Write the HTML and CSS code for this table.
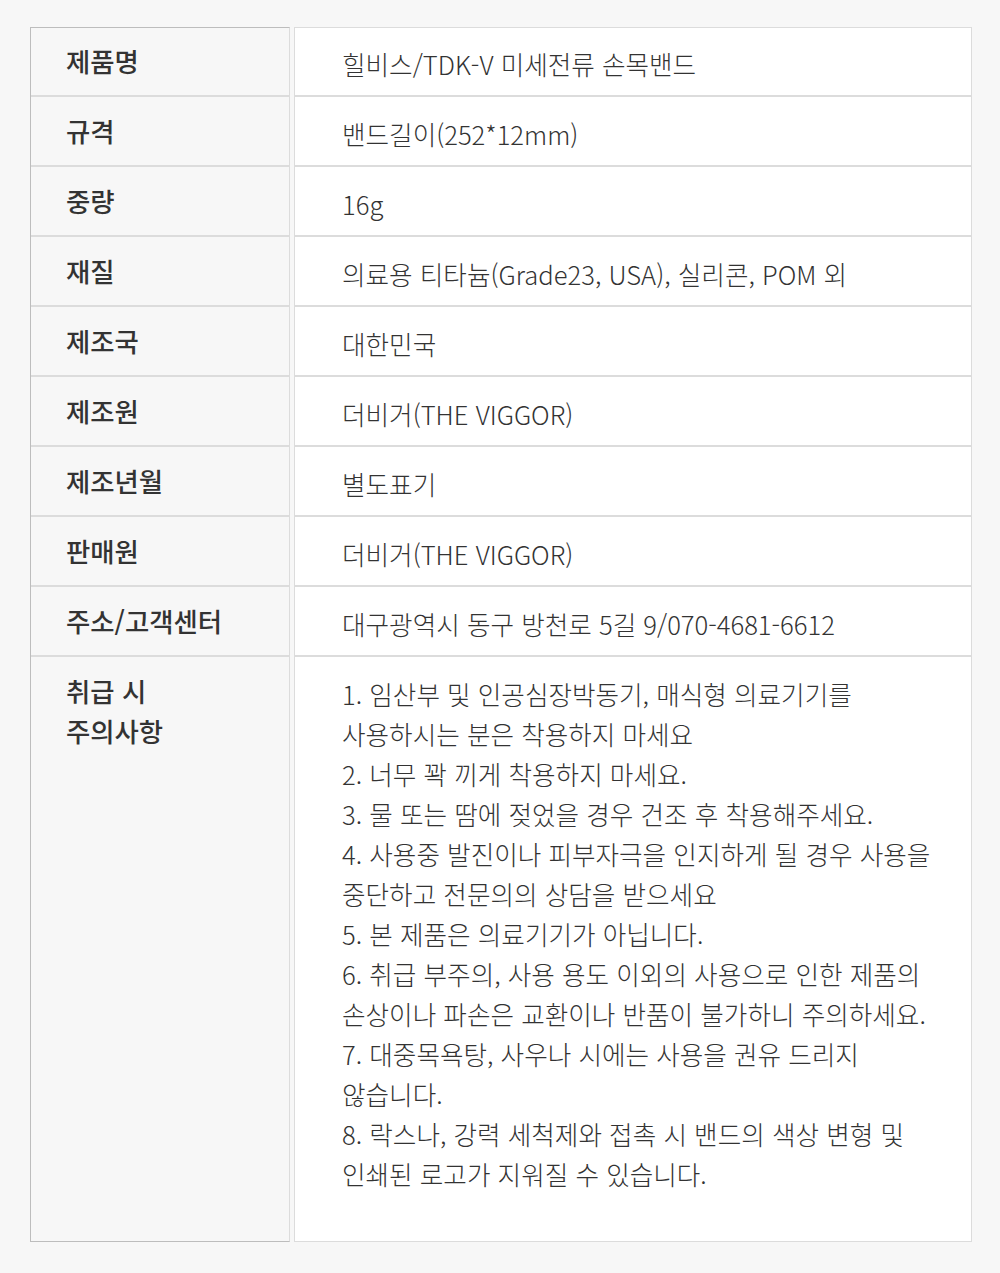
FILE: index.html
```html
<!DOCTYPE html>
<html lang="ko">
<head>
<meta charset="utf-8">
<title>제품 정보</title>
<link rel="stylesheet" href="styles.css">
</head>
<body>
<div class="spec">
  <div class="th first">제품명</div>
  <div class="td first">힐비스/TDK-V 미세전류 손목밴드</div>

  <div class="th">규격</div>
  <div class="td">밴드길이(252*12mm)</div>

  <div class="th">중량</div>
  <div class="td">16g</div>

  <div class="th">재질</div>
  <div class="td">의료용 티타늄(Grade23, USA), 실리콘, POM 외</div>

  <div class="th">제조국</div>
  <div class="td">대한민국</div>

  <div class="th">제조원</div>
  <div class="td">더비거(THE VIGGOR)</div>

  <div class="th">제조년월</div>
  <div class="td">별도표기</div>

  <div class="th">판매원</div>
  <div class="td">더비거(THE VIGGOR)</div>

  <div class="th">주소/고객센터</div>
  <div class="td">대구광역시 동구 방천로 5길 9/070-4681-6612</div>

  <div class="th last">취급 시<br>주의사항</div>
  <div class="td last">1. 임산부 및 인공심장박동기, 매식형 의료기기를<br>사용하시는 분은 착용하지 마세요<br>2. 너무 꽉 끼게 착용하지 마세요.<br>3. 물 또는 땀에 젖었을 경우 건조 후 착용해주세요.<br>4. 사용중 발진이나 피부자극을 인지하게 될 경우 사용을<br>중단하고 전문의의 상담을 받으세요<br>5. 본 제품은 의료기기가 아닙니다.<br>6. 취급 부주의, 사용 용도 이외의 사용으로 인한 제품의<br>손상이나 파손은 교환이나 반품이 불가하니 주의하세요.<br>7. 대중목욕탕, 사우나 시에는 사용을 권유 드리지<br>않습니다.<br>8. 락스나, 강력 세척제와 접촉 시 밴드의 색상 변형 및<br>인쇄된 로고가 지워질 수 있습니다.</div>
</div>
</body>
</html>
```

FILE: styles.css
```css
html, body {
  margin: 0;
  padding: 0;
  background: #f7f7f7;
}

body {
  font-family: "Noto Sans CJK KR", "Noto Sans", sans-serif;
  color: #333;
}

.spec {
  display: grid;
  grid-template-columns: 259px 678px;
  column-gap: 4px;
  width: 941px;
  margin: 27px 0 0 30px;
  border-left: 1px solid #bdbdbd;
  background: #f7f7f7;
}

.th {
  background: #f7f7f7;
  border-right: 1px solid #dcdcdc;
  border-bottom: 2px solid #dcdcdc;
  padding: 14px 0 14px 35px;
  font-size: 26.4px;
  line-height: 40px;
  font-weight: 500;
  color: #333;
  white-space: nowrap;
}

.td {
  background: #fff;
  border-left: 1px solid #dcdcdc;
  border-right: 1px solid #dcdcdc;
  border-bottom: 2px solid #dcdcdc;
  padding: 17px 0 11px 47px;
  font-size: 25.6px;
  line-height: 40px;
  font-weight: 300;
  color: #333;
  white-space: nowrap;
}

.th.first {
  border-top: 1px solid #bdbdbd;
  padding-top: 13px;
}

.td.first {
  border-top: 1px solid #dcdcdc;
  padding-top: 16px;
}

.th.last {
  border-bottom: 1px solid #bdbdbd;
}

.td.last {
  border-bottom: 1px solid #dcdcdc;
  padding-bottom: 47px;
}
```
